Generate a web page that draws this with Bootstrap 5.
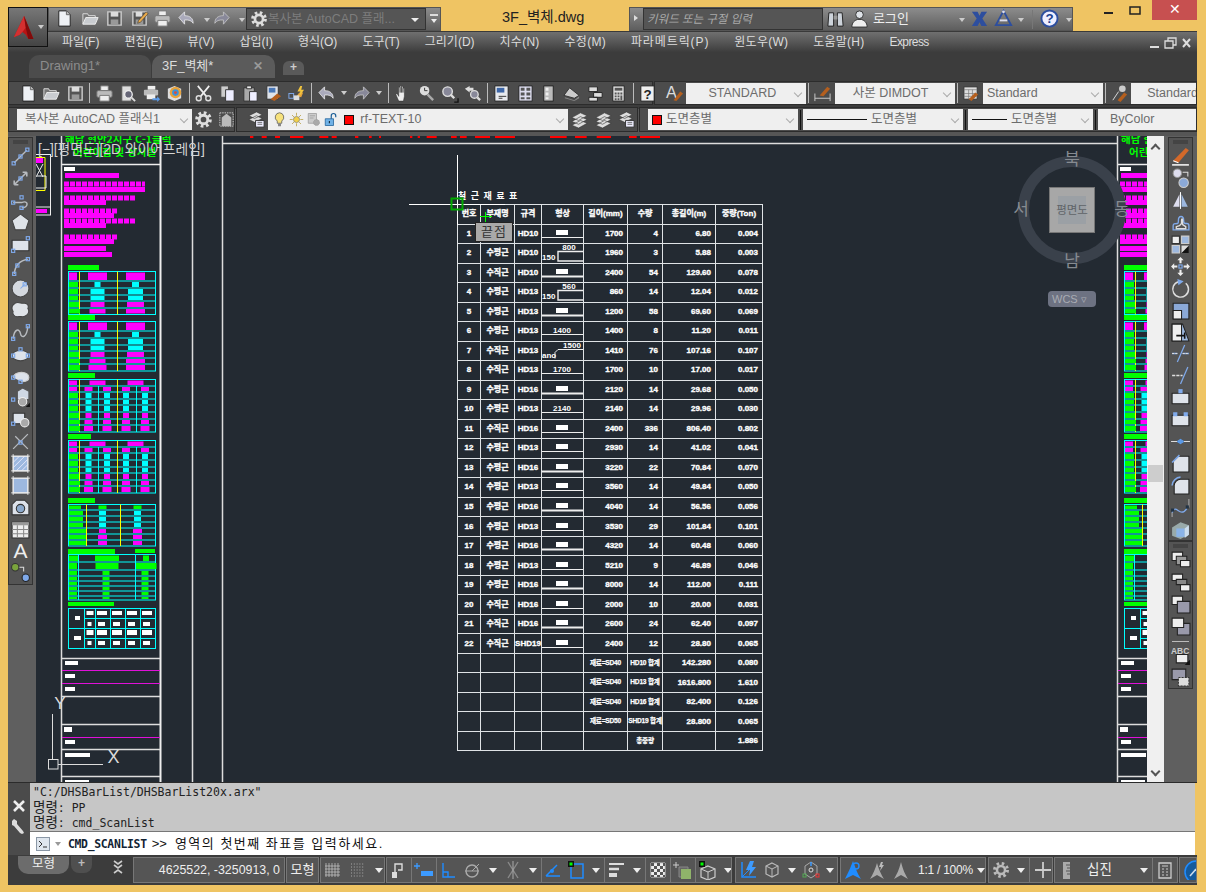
<!DOCTYPE html>
<html lang="ko">
<head>
<meta charset="UTF-8">
<title>3F_벽체.dwg - AutoCAD</title>
<link href="https://cdn.jsdelivr.net/npm/bootstrap@5.3.0/dist/css/bootstrap.min.css" rel="stylesheet">
<style>
    :root { --kr: "Liberation Sans", "Noto Sans CJK KR", sans-serif; }
    html, body { height: 892px; overflow: hidden; }
    body { background: #efc463; font-family: var(--kr); width: 1206px; padding: 0 9px 0 8px; position: relative; }
    svg { display: block; }

    /* title row */
    .title-row { height: 31px; padding-top: 7px; }
    .logo-btn { position: absolute; left: 8px; top: 7px; width: 40px; height: 40px; background: linear-gradient(#777, #444); border: 1px solid #111; z-index: 3; }
    .qat { margin-left: 40px; width: 393px; height: 24px; background: linear-gradient(#8c8c8c, #5e5e5e); border: 1px solid #555; }
    .qat-combo { position: absolute; left: 197px; top: 0; width: 180px; height: 22px; background: #555; border: 1px solid #333; color: #7d7d7d; font-size: 12.5px; line-height: 20px; white-space: nowrap; }
    .doc-title { margin-left: 61px; width: 82px; font-size: 14.5px; color: #222; line-height: 18px; padding-top: 1px; white-space: nowrap; }
    .info-center { margin-left: 45px; width: 444px; height: 24px; background: linear-gradient(#8c8c8c, #5e5e5e); border: 1px solid #555; }
    .search-box { position: absolute; left: 13px; top: 0; width: 180px; height: 22px; background: #555; border: 1px solid #333; color: #aaa; font-style: italic; font-size: 11.5px; line-height: 20px; padding-left: 3px; }
    .win-btns { margin-left: auto; margin-top: -7px; height: 20px; }
    .win-close { width: 45px; height: 20px; background: #c75050; color: #fff; font-size: 14px; line-height: 19px; text-align: center; }
    .at { position: absolute; }

    /* menu + tabs */
    .menu-row { height: 21px; background: linear-gradient(#707070, #3d3d3d); padding-left: 54px; color: #ddd; font-size: 12px; line-height: 21px; gap: 25px; white-space: nowrap; border-top: 1px solid #3a3a3a; }
    .menu-row span:nth-child(n+8) { letter-spacing: .25px; }
    .menu-row span:nth-child(10) { letter-spacing: .9px; }
    .menu-row span:nth-child(13) { letter-spacing: -.6px; }
    .tab-row { height: 26px; background: #3c3c3c; padding: 3px 0 0 21px; }
    .doc-tab { height: 23px; font-size: 13px; line-height: 22px; border-radius: 10px 10px 0 0; position: relative; }
    .doc-tab.off { width: 122px; background: #4c4c4c; color: #8c8c8c; padding-left: 11px; }
    .doc-tab.on { width: 123px; margin-left: 1px; background: #5b5b5b; color: #ddd; padding-left: 10px; }
    .doc-tab.plus { width: 21px; height: 14px; margin: 6px 0 0 8px; background: #5a5a5a; color: #ccc; border-radius: 6px 6px 0 0; font-size: 12px; line-height: 13px; text-align: center; font-weight: bold; }

    /* toolbars */
    .tb-row { height: 27px; background: #3c3c3c; padding-top: 3px; gap: 1px; overflow: hidden; }
    .tb-row2 { height: 31px; background: #565656; box-shadow: inset 0 4px 0 #3c3c3c; padding-top: 2px; gap: 1px; overflow: hidden; }
    .tb-panel { height: 24px; background: #4c4c4c; border: 1px solid #2c2c2c; align-items: center; flex: none; }
    .tb-panel.fill { flex: 1; min-width: 0; overflow: hidden; }
    .tb-row2 .tb-panel { height: 25px; }
    .grip { width: 5px; height: 14px; margin: 0 1px 0 2px; flex: none; background-image: radial-gradient(#a0a0a0 40%, transparent 45%); background-size: 2px 2px; }
    .ti { flex: none; width: 23.3px; display: flex; justify-content: center; }
    .ti svg { width: 19px; height: 19px; }
    .tsep { flex: none; width: 1px; height: 20px; background: #bbb; margin: 0 2.5px; }
    .caret-d { flex: none; width: 0; height: 0; border-left: 3px solid transparent; border-right: 3px solid transparent; border-top: 4px solid #ccc; margin: 0 3px; }
    .cad-combo { flex: none; height: 21px; background: #efefef; color: #6c6c6c; font-size: 12.5px; position: relative; display: flex; align-items: center; white-space: nowrap; overflow: hidden; }
    .cad-combo::after { content: ""; position: absolute; right: 5px; top: 7px; width: 6px; height: 6px; border-right: 1.5px solid #aaa; border-bottom: 1.5px solid #aaa; transform: rotate(45deg); background: #efefef; }
    .lt-line { flex: none; height: 1px; background: #111; }
    .sw-red { flex: none; width: 10px; height: 10px; background: #f00; border: 1px solid #111; }

    /* middle */
    .mid-row { height: 646px; background: #5f5f5f; }
    .side-left { width: 28px; padding-top: 1px; }
    .side-right { width: 33px; padding: 1px 0 0 4px; }
    .vbar { width: 25px; background: #545454; border: 1px solid #333; }
    .vbar .grip-h { height: 8px; margin: 0 -0px; background: #444 radial-gradient(#999 40%, transparent 45%) center / 2px 2px; background-clip: content-box; padding: 2px 4px; }
    .vi { height: 21.9px; display: flex; justify-content: center; align-items: center; }
    .vi svg { width: 21px; height: 21px; }
    .canvas-area { width: 1111px; background: #232a32; position: relative; overflow: hidden; }
    .canvas-area > svg { position: absolute; left: 0; top: 0; }
    .view-label { position: absolute; left: 2px; top: 5px; color: #d4d4d4; font-size: 13.8px; line-height: 18px; white-space: nowrap; }
    .rebar-wrap { position: absolute; left: 421px; top: 68px; }
    .rebar-table { --bs-table-bg: transparent; --bs-table-color: #fff; --bs-border-color: #dfe3e6; width: 305px; table-layout: fixed; margin: 0; color: #fff; font-size: 8px; font-weight: bold; line-height: 1; -webkit-text-stroke: .35px #fff; border-color: #dfe3e6; }
    .rebar-table > * > tr > * { padding: 0 4px 0 0; height: 19.53px; vertical-align: middle; text-align: right; white-space: nowrap; background: transparent; color: #fff; }
    .rebar-table > * > tr > .c { text-align: center; padding: 0; }
    .rebar-table > * > tr > .s { padding: 0; overflow: hidden; }
    .rebar-table > * > tr > .sum-cell { font-size: 6.6px; letter-spacing: -.2px; -webkit-text-stroke: .25px #fff; }
    .rebar-table svg { -webkit-text-stroke: 0; }
    .snap-tip { position: absolute; left: 439px; top: 86px; width: 38px; height: 20px; background: #a9a9a9; border: 1px solid #222; color: #333; font-size: 13px; line-height: 18px; text-align: center; letter-spacing: 1px; }
    .view-cube { position: absolute; left: 977px; top: 14px; width: 120px; height: 180px; }
    .cube-face { position: absolute; left: 36px; top: 37px; width: 46px; height: 46px; background: #a7a7a7; border: 1px solid #777; }
    .cube-inner { position: absolute; left: 8px; top: 8px; width: 28px; height: 28px; background: #9ba0a5; color: #606468; font-size: 11.5px; line-height: 28px; text-align: center; white-space: nowrap; display: flex; justify-content: center; }
    .cube-dir { position: absolute; color: #868b91; font-size: 17px; line-height: 20px; width: 20px; text-align: center; }
    .wcs-pill { position: absolute; left: 35px; top: 141px; width: 48px; height: 16px; background: #6d7282; border-radius: 4px; color: #a9acb3; font-size: 11px; line-height: 16px; padding-left: 4px; }
    .v-scroll { width: 17px; background: #f0f0f0; position: relative; }
    .v-thumb { position: absolute; left: 1px; right: 1px; top: 329px; height: 17px; background: #cdcdcd; }
    .chev { position: absolute; left: 5px; width: 7px; height: 7px; border-left: 2px solid #555; border-top: 2px solid #555; }

    /* command line */
    .cmd-row { height: 73px; border-top: 1px solid #2b2b2b; }
    .cmd-handle { width: 22px; background: #4b4b4b; }
    .cmd-body { width: 1165px; }
    .cmd-hist { height: 49px; background: #c6c6c6; border-bottom: 1px solid #777; font: 11.5px/15.5px "DejaVu Sans Mono", "Noto Sans CJK KR", monospace; color: #222; padding: 2px 0 0 3px; white-space: pre; }
    .cmd-hist b { font-weight: normal; font-size: 13.5px; line-height: 1; }
    .cmd-input { height: 23px; background: #fff; color: #111; padding-left: 6px; gap: 5px; font-size: 13px; white-space: nowrap; }
    .cmd-input code { font: bold 11.4px "DejaVu Sans Mono", monospace; color: #123; letter-spacing: -.3px; }
    .cmd-prompt { letter-spacing: 1.500px; margin-left: 3px; }

    /* status */
    .status-row { height: 30px; background: #3c3c3c; }
    .model-tabs { width: 125px; position: relative; flex: none; }
    .model-tab { position: absolute; left: 10px; top: 1px; width: 51px; height: 18px; background: #6c6c6c; color: #eee; font-size: 12.5px; line-height: 16px; text-align: center; border-radius: 0 0 10px 10px; }
    .plus-tab { position: absolute; left: 63px; top: 1px; width: 21px; height: 17px; background: #4f4f4f; color: #bbb; border-radius: 0 0 8px 8px; font-size: 12px; line-height: 14px; text-align: center; font-weight: bold; }
    .st-panel { height: 26px; margin-top: 2px; background: #555; border: 1px solid #777; color: #eee; font-size: 13px; align-items: center; white-space: nowrap; flex: none; overflow: hidden; }
    .st-i { flex: none; display: flex; justify-content: center; }
    .st-i svg { width: 20px; height: 20px; }
    .st-sep { flex: none; width: 1px; height: 26px; background: #777; }
    .st-panel .caret-d { border-top-color: #eee; border-left-width: 4px; border-right-width: 4px; border-top-width: 5px; margin: 0 4px; }
    .coord-text { font-size: 12.4px; }
    .scale-text { font-size: 12px; letter-spacing: -.25px; width: 58px; margin-left: 5px; }
</style>
</head>
<body>

<div class="logo-btn d-flex align-items-center ps-1">
    <svg width="27" height="30" viewBox="0 0 27 30"><path d="M13 2L1 27l7-3 3-3 4 3 3 5h6z" fill="#b81414"/><path d="M13 2l2 14-4 5-3 3-7 3z" fill="#d43030"/><path d="M15 16l3 13h6L13 2z" fill="#7f0b0b"/></svg>
    <span class="caret-d" style="margin-left:2px"></span>
</div>

<div class="title-row d-flex">
    <div class="qat position-relative flex-none" id="qat"></div>
    <div class="doc-title">3F_벽체.dwg</div>
    <div class="info-center position-relative" id="infoCenter">
        <div class="search-box">키워드 또는 구절 입력</div>
    </div>
    <div class="win-btns d-flex align-items-start">
        <svg width="40" height="20" viewBox="0 0 40 20"><path d="M0 12h9v2H0z" fill="#222"/><path d="M26 7h10v7H26z" fill="none" stroke="#222" stroke-width="1.5"/></svg>
        <div class="win-close ms-2">✕</div>
    </div>
</div>

<div class="menu-row d-flex">
    <span>파일(F)</span><span>편집(E)</span><span>뷰(V)</span><span>삽입(I)</span><span>형식(O)</span><span>도구(T)</span><span>그리기(D)</span><span>치수(N)</span><span>수정(M)</span><span>파라메트릭(P)</span><span>윈도우(W)</span><span>도움말(H)</span><span>Express</span>
    <svg class="ms-auto me-1 mt-1" width="44" height="14" viewBox="0 0 44 14"><path d="M1 10h9v2H1z" fill="#ddd"/><path d="M16 5h8v7h-8zM19 5V2h8v7h-3" fill="none" stroke="#ddd" stroke-width="1.3"/><path d="M34 3l7 8M41 3l-7 8" stroke="#ddd" stroke-width="2"/></svg>
</div>

<div class="tab-row d-flex">
    <div class="doc-tab off">Drawing1*</div>
    <div class="doc-tab on">3F_벽체*<span class="at" style="right:12px;top:0;color:#999;font-size:12px;font-weight:bold">✕</span></div>
    <div class="doc-tab plus">+</div>
</div>

<div class="tb-row d-flex" id="tbRow1"></div>
<div class="tb-row2 d-flex" id="tbRow2"></div>

<div class="mid-row d-flex">
    <div class="side-left"><div class="vbar" id="leftBar"></div></div>
    <div class="canvas-area">
        <svg id="cadSvg" width="1111" height="646" viewBox="36 136 1111 646" xmlns="http://www.w3.org/2000/svg"></svg>
        <div class="view-label">[−][평면도][2D 와이어프레임]</div>
        <div class="rebar-wrap">
            <table class="table table-bordered rebar-table" id="rebarTable"></table>
        </div>
        <div class="snap-tip">끝점</div>
        <div class="view-cube">
            <svg class="at" style="left:0;top:1px" width="118" height="118" viewBox="0 0 118 118"><circle cx="59" cy="59" r="48.5" fill="none" stroke="#3a414b" stroke-width="11"/></svg>
            <div class="cube-face"><div class="cube-inner">평면도</div></div>
            <div class="cube-dir" style="left:49px;top:0">북</div>
            <div class="cube-dir" style="left:-2px;top:50px">서</div>
            <div class="cube-dir" style="left:99px;top:50px">동</div>
            <div class="cube-dir" style="left:49px;top:102px">남</div>
            <div class="wcs-pill">WCS ▿</div>
        </div>
    </div>
    <div class="v-scroll">
        <div class="chev" style="top:9px;transform:rotate(45deg)"></div>
        <div class="v-thumb"></div>
        <div class="chev" style="bottom:7px;transform:rotate(225deg)"></div>
    </div>
    <div class="side-right">
        <div class="vbar" id="rightBar1"></div>
        <div class="vbar mt-0" id="rightBar2"></div>
    </div>
</div>

<div class="cmd-row d-flex">
    <div class="cmd-handle d-flex flex-column align-items-center">
        <div class="grip" style="width:18px;height:6px;margin:4px 0 6px"></div>
        <svg width="14" height="14" viewBox="0 0 14 14"><path d="M2 2l10 10M12 2L2 12" stroke="#eee" stroke-width="2.6"/></svg>
        <svg class="mt-1" width="16" height="18" viewBox="0 0 16 18"><path d="M3 2l3 2v3l6 7 1 2-2 1-2-1-6-7-2-1V4z" fill="#ddd"/></svg>
    </div>
    <div class="cmd-body">
        <div class="cmd-hist">"C:/DHSBarList/DHSBarList20x.arx"
<b>명령</b>: PP
<b>명령</b>: cmd_ScanList</div>
        <div class="cmd-input d-flex align-items-center">
            <svg width="14" height="14" viewBox="0 0 14 14"><rect x=".5" y=".5" width="13" height="13" fill="#dfe6ee" stroke="#8a97a6"/><path d="M3 4l3 3-3 3M7 10h4" fill="none" stroke="#333"/></svg>
            <span class="caret-d" style="border-top-color:#999;margin:0 2px 0 0"></span>
            <code>CMD_SCANLIST</code><span>&gt;&gt;</span><span class="cmd-prompt">영역의 첫번째 좌표를 입력하세요.</span>
        </div>
    </div>
</div>

<div class="status-row d-flex" id="statusRow">
    <div class="model-tabs">
        <div class="model-tab">모형</div>
        <div class="plus-tab">+</div>
        <svg class="at" style="left:105px;top:5px" width="10" height="14" viewBox="0 0 10 14"><path d="M1 1l4 3 4-3M1 5l4 3 4-3M1 13l4-3 4 3" fill="none" stroke="#ccc" stroke-width="1.6"/></svg>
    </div>
</div>

<script src="https://cdn.jsdelivr.net/npm/bootstrap@5.3.0/dist/js/bootstrap.bundle.min.js"></script>
<script>
    // icon strokes, 20x20 box
    const B = '#7fa9ea', W = '#e6e9ee', G = '#b9bcc0';
    const h = (x, y) => `<rect x="${x-1.5}" y="${y-1.5}" width="3" height="3" fill="none" stroke="${B}" stroke-width="1.1"/>`;
    const ICONS = {
        new: `<path d="M4 2h8l4 4v12H4z" fill="#eef1f5" stroke="#222"/><path d="M12 2v4h4" fill="#bbb" stroke="#666"/>`,
        open: `<path d="M2 16V5h5l1 2h7v2" fill="#777" stroke="#ddd"/><path d="M2 16l3-7h13l-3 7z" fill="#c9ccd0" stroke="#eee"/>`,
        save: `<path d="M3 3h14v14H3z" fill="#555" stroke="#ccc" stroke-width="1.5"/><path d="M6 3h8v5H6z" fill="#ddd"/><path d="M6 11h8v6H6z" fill="#999"/>`,
        saveas: `<path d="M3 3h14v14H3z" fill="#555" stroke="#ccc" stroke-width="1.5"/><path d="M6 3h7v5H6z" fill="#ddd"/><path d="M6 11h8v6H6z" fill="#999"/><path d="M9 12l8-9 2 2-8 9-3 1z" fill="#e8a94a" stroke="#333" stroke-width=".6"/>`,
        plot: `<path d="M6 2h8v5H6z" fill="#eee" stroke="#777"/><rect x="2" y="7" width="16" height="7" rx="1.5" fill="#bbb" stroke="#777"/><path d="M5 12h10v6H5z" fill="#eee" stroke="#777"/>`,
        prev: `<path d="M4 2h10v16H4z" fill="#ddd" stroke="#555"/><circle cx="11" cy="11" r="4" fill="#667" stroke="#eee" stroke-width="1.4"/><path d="M14 14l4 4" stroke="#ddd" stroke-width="2"/>`,
        publ: `<path d="M6 2h8v4H6z" fill="#eee"/><rect x="2" y="6" width="15" height="6" rx="1" fill="#bbb"/><path d="M5 11h9v5H5z" fill="#eee"/><path d="M11 15h5v-2l3 3-3 3v-2h-5z" fill="#5b9ae8"/>`,
        d3: `<path d="M10 2l7 3v10l-7 3-7-3V5z" fill="#ddd"/><circle cx="11" cy="9" r="6" fill="#e8a33c"/><circle cx="11" cy="9" r="3.5" fill="#3c93d8"/><circle cx="11" cy="9" r="1.5" fill="#e04b3a"/>`,
        cut: `<path d="M4 2l9 11M16 2L7 13" stroke="#eee" stroke-width="1.8"/><circle cx="5" cy="15" r="2.6" fill="none" stroke="#ddd" stroke-width="1.5"/><circle cx="15" cy="15" r="2.6" fill="none" stroke="#ddd" stroke-width="1.5"/>`,
        copy: `<path d="M3 2h8v12H3z" fill="#ccc" stroke="#444"/><path d="M8 6h9v12H8z" fill="#eef" stroke="#333"/>`,
        paste: `<path d="M3 4h11v14H3z" fill="#aaa" stroke="#333"/><path d="M6 2h5v3H6z" fill="#eee" stroke="#333"/><path d="M9 8h8v10H9z" fill="#eef" stroke="#333"/>`,
        match: `<path d="M3 2h12v14H3z" fill="#dfe3ea" stroke="#333"/><path d="M5 4h7v5H5z" fill="#4a78b8"/><path d="M7 16l7-6 4 3-7 5z" fill="#b55f1e"/>`,
        block: `<path d="M10 13l3-4h4l-2 5z" fill="#e7a43a"/><path d="M14 2l-3 6h3l-1 5 5-7h-3l1-4z" fill="#f2c53d"/><rect x="2" y="10" width="5" height="5" fill="none" stroke="${B}"/><path d="M7 12h6v5H7z" fill="#ddd"/>`,
        undo: `<path d="M2 9l6-6v4c6 0 9 3 9 8-2-3-4-3.500-9-3.500V16z" fill="#aab" stroke="#eee" stroke-width=".8"/>`,
        redo: `<path d="M18 9l-6-6v4C6 7 3 10 3 15c2-3 4-3.500 9-3.500V16z" fill="#889" stroke="#ccc" stroke-width=".8"/>`,
        pan: `<path d="M6 18l-3-7c0-1 1-1 2 0l1 2V4c0-1 1.500-1 1.500 0v5V2.500c0-1 1.500-1 1.500 0V9V3c0-1 1.500-1 1.500 0v6V5c0-1 1.500-1 1.500 0v8l-1 5z" fill="#eee" stroke="#333" stroke-width=".6"/>`,
        zrt: `<circle cx="8" cy="7" r="5" fill="#ddd"/><path d="M8 4v3h3" fill="none" stroke="#333"/><path d="M11 11l6 6" stroke="#aaa" stroke-width="2.500"/>`,
        zwin: `<circle cx="8" cy="8" r="5" fill="#889" stroke="#ddd" stroke-width="1.500"/><path d="M11 11l4 4" stroke="#ddd" stroke-width="2.500"/><path d="M15 19h4v-4" fill="none" stroke="#111" stroke-width="1.400"/>`,
        zprev: `<path d="M2 5l5-3v2h4v3H7v2z" fill="#ddd"/><circle cx="12" cy="11" r="4" fill="#889" stroke="#ddd" stroke-width="1.400"/><path d="M15 14l3 3" stroke="#ddd" stroke-width="2.500"/>`,
        props: `<path d="M3 2h14v16H3z" fill="#e8eaee" stroke="#222"/><path d="M5 4h8v5H5z" fill="#3e67a8"/><path d="M7 13h8M7 15h4" stroke="#333"/>`,
        dc: `<path d="M3 2h14v16H3z" fill="#dde" stroke="#222"/><path d="M5 4h4v3H5zM11 4h4v3h-4zM5 9h4v3H5zM11 9h4v3h-4zM5 14h4v2H5zM11 14h4v2h-4z" fill="#555"/>`,
        tool: `<path d="M5 2h10v16H5z" fill="#bbb" stroke="#222"/><path d="M7 4h3v3H7zM7 9h3v3H7zM7 14h3v2H7z" fill="#eee"/>`,
        sheet: `<path d="M2 12l6-8 10 8-5 3z" fill="#ccc" stroke="#333"/><path d="M3 14l10 3 5-4v2l-5 3-10-3z" fill="#888"/>`,
        markup: `<path d="M3 3h9v5H3zM8 9h9v5H8zM3 14h9v4H3z" fill="#ddd" stroke="#222"/>`,
        calc: `<path d="M4 2h12v16H4z" fill="#ddd" stroke="#222"/><path d="M6 4h8v3H6z" fill="#555"/><path d="M6 9h2v2H6zM9 9h2v2H9zM12 9h2v2h-2zM6 12h2v2H6zM9 12h2v2H9zM12 12h2v5h-2zM6 15h2v2H6zM9 15h2v2H9z" fill="#555"/>`,
        help: `<path d="M3 2h14v16H3z" fill="#eee" stroke="#222"/><text x="10" y="15.500" text-anchor="middle" font-family="Liberation Sans" font-weight="bold" font-size="14" fill="#222">?</text>`,
        gear: `<circle cx="10" cy="10" r="7" fill="none" stroke="#ddd" stroke-width="3.500" stroke-dasharray="2.800 2.700"/><circle cx="10" cy="10" r="4.500" fill="none" stroke="#ddd" stroke-width="3"/>`,
        wslock: `<path d="M3 3h14v14H3z" fill="none" stroke="#ccc" stroke-dasharray="1.500 1"/><path d="M5 17V8l5-4 5 4v9z" fill="#bbb"/>`,
        style: `<text x="1" y="15" font-family="Liberation Sans" font-size="17" fill="#ddd">A</text><path d="M9 17l7-9 3 2-7 8z" fill="#b55f1e"/>`,
        dim: `<path d="M2 10v8M18 10v8M2 15h16" stroke="#ccc"/><path d="M7 12l8-9 3 2-7 8z" fill="#b55f1e"/>`,
        tbl: `<path d="M2 3h14v13H2z" fill="#ddd" stroke="#333"/><path d="M2 6h14M2 10h14M2 13h14M7 6v10M11 6v10" stroke="#777" stroke-width=".7"/><path d="M7 16l7-7 3 2-7 7z" fill="#b55f1e"/>`,
        mlead: `<circle cx="13" cy="5" r="3.500" fill="#ccc"/><path d="M3 17l6-9" stroke="#ddd"/><path d="M8 17l7-8 3 2-7 8z" fill="#b55f1e"/>`,
        layers: `<path d="M2 6l8-4 6 3-8 4zM2 10l8-4 6 3-8 4z" fill="#ddd" stroke="#333" stroke-width=".6"/><path d="M9 11h9v7H9z" fill="#eef" stroke="#333"/><path d="M11 13h5M11 15h5" stroke="#666"/>`,
        lstack: `<path d="M2 8l9-5 7 3-9 5zM2 12l9-5 7 3-9 5zM2 16l9-5 7 3-9 5z" fill="#ddd" stroke="#333" stroke-width=".6"/>`,
        bulb: `<path d="M10 1a6 6 0 0 0-3 11v3h6v-3a6 6 0 0 0-3-11z" fill="#f7e27c" stroke="#555"/><path d="M8 15h4v4H8z" fill="#888"/>`,
        sun: `<circle cx="10" cy="10" r="4" fill="#f2d04a" stroke="#887"/><path d="M10 1v4M10 15v4M1 10h4M15 10h4M4 4l3 3M13 13l3 3M16 4l-3 3M7 13l-3 3" stroke="#b59b3a"/>`,
        frz: `<path d="M3 2h11v13H3z" fill="#ccc" stroke="#999"/><path d="M5 5h7M5 8h5" stroke="#999"/><circle cx="14" cy="14" r="4" fill="#aaa" stroke="#999" stroke-dasharray="2 1"/>`,
        lock: `<path d="M3 9h11v9H3z" fill="#6fb1e6" stroke="#1b5e96"/><path d="M11 9V5c0-4 6-4 6 0v2" fill="none" stroke="#1b5e96" stroke-width="1.600"/><path d="M8.500 12v3" stroke="#123" stroke-width="1.400"/>`,
        line: `<path d="M4 16L16 4" stroke="${G}" stroke-width="1.300"/>${h(3.5,16.5)}${h(10,10)}${h(16.5,3.5)}`,
        xline: `<path d="M4 16L16 4M4 16l0-4M4 16h4M16 4l-4 0M16 4v4" stroke="${G}" stroke-width="1.500" fill="none"/>${h(10,10)}`,
        pline: `<path d="M3 12h8c7-3 7 5 0 5" fill="none" stroke="${G}" stroke-width="1.400"/>${h(3,12)}${h(11,17)}${h(11,7)}`,
        polygon: `<path d="M10 2l8 6-3 9H5L2 8z" fill="#dfe3e8" stroke="#444"/>`,
        rect: `<path d="M2 6h16v10H2z" fill="#dde2ea" stroke="#333"/>${h(17,4)}${h(3,16)}`,
        arc: `<path d="M4 17C5 8 10 4 17 3" fill="none" stroke="${G}" stroke-width="1.400"/>${h(4,17)}${h(7,9)}${h(17,3)}`,
        circle: `<circle cx="10" cy="10" r="8" fill="#d4d8de" stroke="#444"/><path d="M10 10l4-4" stroke="${B}"/>${h(14,6)}`,
        cloud: `<path d="M5 3c3-2 6 1 9 0 3 0 4 3 3 5 2 3 0 6-2 7-3 2-5 0-8 1-3 0-5-3-4-5-2-3-1-6 2-8z" fill="#dfe3e8" stroke="#444"/>`,
        spline: `<path d="M3 16C4 6 9 6 10 11s6 4 7-7" fill="none" stroke="${G}" stroke-width="1.400"/>${h(3,16)}${h(17,4)}`,
        ellipse: `<ellipse cx="10" cy="12" rx="8" ry="5" fill="#dde2ea" stroke="#444"/>${h(10,6)}${h(3,12)}${h(17,12)}`,
        earc: `<path d="M3 12c0-3 4-5 8-5s7 2 7 5-3 4-7 4" fill="#dde2ea" stroke="#ccc"/>${h(3,12)}${h(10,16)}`,
        insert: `<path d="M7 4l5-3 6 3v8h-11z" fill="#cfd8e4" stroke="#555"/><circle cx="12" cy="14" r="4" fill="#aaa" stroke="#eee"/>${h(3,12)}<path d="M15 19l4-4v4z" fill="#111"/>`,
        mkblock: `<path d="M3 4h11v10H3z" fill="#dde2ea" stroke="#333"/><circle cx="14" cy="13" r="4" fill="#aaa" stroke="#eee"/>${h(3,14)}`,
        point: `<path d="M3 17L17 3M5 5l12 12" stroke="${G}" stroke-width="1.200"/>${h(10,11)}`,
        hatch: `<path d="M3 3h14v14H3z" fill="#9db8df" stroke="#eee"/><path d="M3 9l6-6M3 14L14 3M6 17L17 6M11 17l6-6" stroke="#eef" stroke-width=".8"/><path d="M1 3h18M3 1v18M1 17h18M17 1v18" stroke="#eee" stroke-width=".8"/>`,
        grad: `<path d="M3 3h14v14H3z" fill="#9db8df" stroke="#eee"/><path d="M1 3h18M3 1v18M1 17h18M17 1v18" stroke="#eee" stroke-width=".8"/>`,
        region: `<path d="M6 3h8l4 4v10H2V7z" fill="#dde2ea" stroke="#333"/><circle cx="10" cy="11" r="4" fill="#8ba9cc" stroke="#333"/>`,
        table: `<path d="M2 3h16v15H2z" fill="#eee" stroke="#333"/><path d="M2 3h16v3H2z" fill="#999"/><path d="M2 10h16M2 14h16M7 6v12M13 6v12" stroke="#888"/>`,
        bigA: `<text x="10" y="17" text-anchor="middle" font-family="Liberation Sans" font-size="20" fill="#eee">A</text>`,
        addsel: `<circle cx="5" cy="5" r="3.500" fill="#7aa33c" stroke="#333"/><circle cx="15" cy="15" r="3.500" fill="#7fa9ea" stroke="#222"/><path d="M9 5h4v4" fill="none" stroke="#ddd"/>`,
        erase: `<path d="M3 14L15 2l3 2-10 12z" fill="#d4692a"/><path d="M3 14l5 2" stroke="#fff"/><path d="M2 18h16" stroke="#fff" stroke-width="1.400"/>`,
        copyo: `<circle cx="7" cy="5" r="4" fill="#dde" stroke="#999"/><circle cx="13" cy="14" r="4.500" fill="#8ba9d8" stroke="#ccc"/><path d="M12 4h5v4" fill="none" stroke="#ddd"/>`,
        mirror: `<path d="M10 2v16" stroke="#fff"/><path d="M9 4v12H3z" fill="#dde"/><path d="M11 4v12h6z" fill="#9db8df"/>`,
        offset: `<path d="M3 17v-4c0-2 1-2 4-2 1 0 1-1 1-3 0-5 5-5 5 0 0 3 1 3 3 3 2 0 2 1 2 2v4z" fill="none" stroke="${B}" stroke-width="1.300"/><path d="M6 16v-2l3-1 2-2v-3c0-2 1-2 1 0v4l3 2v2z" fill="none" stroke="#ddd" stroke-width="1.300"/>`,
        array: `<path d="M2 2h7v7H2z" fill="#eee" stroke="#333"/><path d="M11 2h7v7h-7zM2 11h7v7H2z" fill="#9db8df" stroke="#ccc"/><path d="M11 11h7v7h-7z" fill="#ddd"/><path d="M18 11v7h-7z" fill="#111"/>`,
        move: `<path d="M10 1l3 3h-2v3H9V4H7zM10 19l-3-3h2v-3h2v3h2zM1 10l3-3v2h3v2H4v2zM19 10l-3 3v-2h-3V9h3V7z" fill="#eee"/>${h(10,10)}`,
        rotate: `<path d="M15 5a7.500 7.500 0 1 1-7-1.500" fill="none" stroke="#ddd" stroke-width="1.400"/><path d="M7 1l6 2-5 4z" fill="#7fa9ea"/>`,
        scale: `<path d="M3 3h15v15H3z" fill="#8ba9d8" stroke="#222"/><path d="M3 10h8v8H3z" fill="#eee" stroke="#222"/>`,
        stretch: `<path d="M2 2h10l6 16H2z" fill="#9db8df" stroke="#222"/><path d="M2 2h9v16H2z" fill="#eee" stroke="#222"/><path d="M6 13h8M14 10v6" stroke="#111" stroke-width="1.500"/>`,
        trim: `<path d="M2 10h5M12 10h6M14 2L7 18" stroke="${B}" stroke-width="1.200"/><path d="M2 10h6" stroke="#ddd" stroke-dasharray="2 1"/><path d="M12 10h6" stroke="#ddd" stroke-dasharray="2 1"/>`,
        extend: `<path d="M2 10h10" stroke="#ddd" stroke-dasharray="3 1" stroke-width="1.200"/><path d="M17 2l-7 16" stroke="${B}" stroke-width="1.200"/>`,
        brkp: `<path d="M2 6h16v10H2z" fill="#dfe3ea" stroke="#222"/><path d="M8 2h4v4H8z" fill="#7fa9ea"/>`,
        brk: `<path d="M2 6h16v10H2z" fill="#dfe3ea" stroke="#222"/><path d="M3 3h4v4H3zM13 3h4v4h-4z" fill="#7fa9ea"/>`,
        join: `<path d="M1 10h6M13 10h6" stroke="#ddd"/><path d="M7 10l3 2 3-2M7 10l3-2 3 2" fill="#5b9ae8" stroke="#5b9ae8"/>`,
        chamf: `<path d="M8 3h10v15H3V8z" fill="#dfe3ea" stroke="#222"/><path d="M2 9L9 2" stroke="#7fa9ea" stroke-width="1.500"/>`,
        fillet: `<path d="M10 4h8v14H4v-8c0-3 3-6 6-6z" fill="#dfe3ea" stroke="#222"/><path d="M2 10c0-4 4-8 8-8" fill="none" stroke="#7fa9ea" stroke-width="1.500"/>`,
        blend: `<path d="M2 15c4-10 7 6 14-4" fill="none" stroke="#7fa9ea" stroke-width="1.300"/><path d="M2 15v4M18 2v8" stroke="#aaa"/><rect x="1" y="11" width="3" height="3" fill="#234"/><rect x="15" y="8" width="3" height="3" fill="#234"/>`,
        expl: `<path d="M2 8l8-5 8 3v9l-8 4-8-3z" fill="#9aa"/><path d="M6 9h8v8H6z" fill="#8ab3e8"/><path d="M14 9l4-3v9l-4 3z" fill="#cde"/>`,
        dofront: `<path d="M2 2h10v8H2z" fill="#eee" stroke="#222"/><path d="M6 6h10v8H6z" fill="#999" stroke="#222"/><path d="M10 10h9v6h-9z" fill="#eee" stroke="#222"/>`,
        doback: `<path d="M2 2h10v6H2z" fill="#eee" stroke="#222"/><path d="M6 7h10v5H6z" fill="#888" stroke="#222"/><path d="M10 12h9v6h-9z" fill="#eee" stroke="#222"/>`,
        doabove: `<path d="M2 2h10v8H2z" fill="#eee" stroke="#222"/><path d="M7 7h12v11H7z" fill="#99a" stroke="#222"/>`,
        dobelow: `<path d="M7 7h12v11H7z" fill="#99a" stroke="#222"/><path d="M2 2h11v9H2z" fill="#eee" stroke="#222"/>`,
        textfront: `<text x="1" y="9" font-family="Liberation Sans" font-size="8" font-weight="bold" fill="#ccc">ABC</text><path d="M6 9h11v8H6z" fill="#eee" stroke="#222"/><path d="M14 19l5-5v5z" fill="#111"/>`,
        hatchback: `<path d="M2 2h13v10H2z" fill="#99a" stroke="#222"/><path d="M8 10h10v8H8z" fill="#ddd" stroke="#333" stroke-dasharray="2 1"/>`,
        // status bar
        grid: `<path d="M3 3v14M6 3v14M9 3v14M12 3v14M15 3v14M2 6h15M2 9h15M2 12h15M2 15h15" stroke="#ccc" stroke-width=".7"/>`,
        snap: `<path d="M3 4h14M3 7h14M3 10h14M3 13h14M3 16h14" stroke="#aaa" stroke-width="1" stroke-dasharray="1 1.800"/>`,
        infer: `<path d="M6 17V4h7v6H9" fill="none" stroke="#ddd" stroke-width="1.400"/><path d="M3 12h5v6H3z" fill="#ddd"/>`,
        dyn: `<path d="M3 3v6M0 6h6" stroke="#3d9bff" stroke-width="1.300"/><rect x="7" y="11" width="12" height="5" fill="#3d9bff"/>`,
        ortho: `<path d="M4 3v14h12M4 12h5v5" fill="none" stroke="#1f8cff" stroke-width="1.400"/>`,
        polar: `<circle cx="9" cy="11" r="6" fill="none" stroke="#aaa" stroke-width="1.400"/><path d="M9 11l7-7M2 11h14" stroke="#aaa"/>`,
        iso: `<path d="M5 2l10 16M15 2L5 18" stroke="#8a8a8a" stroke-width="1.400"/><path d="M10 1v18" stroke="#aaa"/>`,
        osnap: `<path d="M3 16h14M3 16L14 5" stroke="#1f8cff" stroke-width="1.500"/><circle cx="9" cy="11" r="2" fill="#1f8cff"/>`,
        snap3: `<path d="M5 4h12v14H5z" fill="none" stroke="#1f8cff" stroke-width="1.500"/><rect x="2" y="1" width="6" height="6" fill="#111"/><rect x="3.500" y="2.500" width="3" height="3" fill="#0f0"/>`,
        lw: `<path d="M2 4h15" stroke="#ddd" stroke-width="2"/><path d="M2 9h10" stroke="#ddd" stroke-width="2.500"/><path d="M2 15h8" stroke="#ddd" stroke-width="4"/>`,
        transp: `<path d="M3 3h14v14H3z" fill="#eee" stroke="#ccc"/><path d="M3 3h3v3H3zM9 3h3v3H9zM15 3h2v3h-2zM6 6h3v3H6zM12 6h3v3h-3zM3 9h3v3H3zM9 9h3v3H9zM15 9h2v3h-2zM6 12h3v3H6zM12 12h3v3h-3zM3 15h3v2H3zM9 15h3v2H9zM15 15h2v2h-2z" fill="#555"/>`,
        selcyc: `<path d="M3 2v6M0 5h6" stroke="#ccc"/><path d="M6 7h9v10H6z" fill="#666" stroke="#888"/><path d="M8 9h10v10H8z" fill="#8fb36a"/>`,
        gizmo: `<path d="M10 6l7 3v8l-7 3-7-3V9z" fill="none" stroke="#ccc" stroke-width="1.200"/><path d="M3 9l7 3 7-3M10 12v8" fill="none" stroke="#ccc"/><rect x="1" y="1" width="6" height="6" fill="#111"/><rect x="2.500" y="2.500" width="3" height="3" fill="#0f0"/>`,
        ducs: `<path d="M4 2v15h14" fill="none" stroke="#1f8cff" stroke-width="1.500"/><path d="M4 17L13 8" stroke="#1f8cff"/><path d="M12 1L8 10h4l-1 6 7-9h-4l2-6z" fill="#3d9bff"/>`,
        dyncube: `<path d="M10 3l6 3v8l-6 3-6-3V6z" fill="none" stroke="#bbb" stroke-width="1.200"/><path d="M4 6l6 3 6-3M10 9v8" fill="none" stroke="#bbb"/>`,
        gizmo2: `<path d="M10 2l6 4v8l-6 4-6-4V6z" fill="none" stroke="#aaa"/><circle cx="10" cy="10" r="2" fill="none" stroke="#ddd"/><path d="M10 2v4" stroke="#3d9bff" stroke-width="1.500"/><rect x="2" y="14" width="3" height="3" fill="none" stroke="#5a5"/><rect x="15" y="14" width="3" height="3" fill="none" stroke="#e33"/>`,
        anno: `<path d="M10 1c-3 8-5 12-8 18l8-4 8 4C14 13 13 9 10 1z" fill="#1f8cff"/><circle cx="13" cy="6" r="3" fill="none" stroke="#1f8cff" stroke-width="1.400"/>`,
        anno2: `<path d="M10 3c-2 7-4 11-7 16l7-4 7 4c-3-5-5-9-7-16z" fill="#aaa"/><path d="M14 2l-2 5h2l-1 4 4-6h-2l1-3z" fill="#bbb"/>`,
        anno3: `<path d="M10 2c-2 8-4 12-7 17l7-4 7 4c-3-5-5-9-7-17z" fill="#aaa"/>`,
        cog: `<circle cx="10" cy="10" r="6.500" fill="none" stroke="#bbb" stroke-width="3" stroke-dasharray="2.500 2.600"/><circle cx="10" cy="10" r="4" fill="none" stroke="#bbb" stroke-width="2.500"/>`,
        plus: `<path d="M10 2v16M2 10h16" stroke="#ccc" stroke-width="1.800"/>`,
        ruler: `<path d="M6 2h7v17H6z" fill="#aaa"/><path d="M9 5h4M10 8h3M9 11h4M10 14h3" stroke="#555"/>`,
        stcalc: `<path d="M4 3h12v15H4z" fill="none" stroke="#ccc" stroke-width="1.300"/><path d="M7 6h6M7 9h2M11 9h2M7 12h2M11 12h2M7 15h2M11 15h2" stroke="#ccc" stroke-width="1.200"/>`,
        perf: `<circle cx="14" cy="12" r="11" fill="#155a9c" stroke="#1f8cff" stroke-width="1.500"/><path d="M8 16l6-7" stroke="#cde" stroke-width="1.500"/>`,
        binoc: `<path d="M3 4h5v14H2zM12 4h5l1 14h-6z" fill="#cdd3da" stroke="#222"/><path d="M8 7h4v4H8z" fill="#999"/>`,
        user: `<circle cx="10" cy="6" r="4" fill="#dfe3e8" stroke="#333"/><path d="M2 19c0-5 3-7 6-8h4c3 1 6 3 6 8z" fill="#eee" stroke="#333"/>`,
        xa: `<path d="M2 3h6l2 4 2-4h6l-5 7 5 8h-6l-2-4-2 4H2l5-8z" fill="#2d4e9e"/>`,
        a360: `<path d="M10 2L2 17h16z" fill="none" stroke="#2d4e9e" stroke-width="2"/><circle cx="10" cy="3" r="1.500" fill="#dde"/><path d="M6 12h8" stroke="#dde" stroke-width="2"/>`,
        helpc: `<circle cx="10" cy="10" r="8.500" fill="#eef" stroke="#2d4e9e" stroke-width="2"/><text x="10" y="15" text-anchor="middle" font-family="Liberation Sans" font-weight="bold" font-size="14" fill="#1c3f8f">?</text>`
    };
    const svg = (n, s) => `<svg viewBox="0 0 20 20"${s ? ` width="${s}" height="${s}"` : ''} xmlns="http://www.w3.org/2000/svg">${ICONS[n]}</svg>`;
    const ti = n => n === '|' ? '<span class="tsep"></span>' : n === 'v' ? '<span class="caret-d"></span>' : `<span class="ti">${svg(n)}</span>`;
    const combo = (w, inner) => `<div class="cad-combo" style="width:${w}px">${inner}</div>`;
    const grip = '<span class="grip"></span>';
    const abs = (x, w, inner) => `<span class="at" style="left:${x}px;${w ? 'width:' + w + 'px;' : ''}top:1px;display:flex;justify-content:center">${inner}</span>`;

    // quick access
    const qatEl = document.getElementById('qat');
    qatEl.innerHTML = [[63,'new'],[89,'open'],[113,'save'],[138,'saveas'],[161,'plot'],[185,'undo'],[220,'redo']]
        .map(([x, n]) => abs(x - 58, 20, svg(n, 19))).join('')
        + [203, 238].map(x => `<span class="caret-d at" style="left:${x - 51}px;top:10px"></span>`).join('')
        + `<div class="qat-combo"><span class="at" style="left:3px;top:1px">${svg('gear', 18)}</span><span class="at" style="left:21px">복사본 AutoCAD 플래...</span><span class="caret-d at" style="right:3px;top:9px;border-top-color:#eee;border-left-width:4px;border-right-width:4px"></span></div>`
        + `<span class="at" style="left:381px;top:6px;width:8px;border-top:2px solid #ddd"></span><span class="caret-d at" style="left:379px;top:11px;border-top-color:#eee"></span>`;
    document.getElementById('infoCenter').insertAdjacentHTML('beforeend',
        `<span class="caret-d at" style="left:1px;top:7px;border:3px solid transparent;border-left:4px solid #ddd;margin:0 0 0 3px"></span>`
        + [[835,'binoc'],[859,'user'],[979,'xa'],[1003,'a360'],[1049,'helpc']].map(([x, n]) => abs(x - 640, 20, svg(n, 19))).join('')
        + `<span class="at" style="left:243px;top:1px;color:#eee;font-size:13px">로그인</span>`
        + [959, 1018, 1066].map(x => `<span class="caret-d at" style="left:${x - 633}px;top:10px"></span>`).join('')
        + `<span class="at" style="left:402px;top:2px;height:19px;width:1px;background:#777"></span>`);

    // toolbar rows
    document.getElementById('tbRow1').innerHTML =
        `<div class="tb-panel d-flex" style="width:645px">${grip}${['new','open','save','|','plot','prev','publ','d3','|','cut','copy','paste','match','block','|','undo','v','redo','v','|','pan','zrt','zwin','zprev','|','props','dc','tool','sheet','markup','calc','|','help'].map(ti).join('')}</div>`
        + `<div class="tb-panel fill d-flex">${grip}${ti('style')}${combo(120, '<span class="mx-auto pe-2">STANDARD</span>')}<span class="tsep" style="margin:0 2px 0 2px"></span>${ti('dim')}${combo(120, '<span class="mx-auto pe-2">사본 DIMDOT</span>')}<span class="tsep" style="margin:0 2px"></span>${ti('tbl')}${combo(120, '<span class="ps-1">Standard</span>')}<span class="tsep" style="margin:0 2px"></span>${ti('mlead')}${combo(120, '<span class="ps-3">Standard</span>')}</div>`;
    const solid = w => `<span class="lt-line ms-1" style="width:${w}px"></span>`;
    document.getElementById('tbRow2').innerHTML =
        `<div class="tb-panel d-flex" style="width:227px">${grip}${combo(175, '<span class="ps-2">복사본 AutoCAD 플래식1</span>')}${ti('gear')}${ti('wslock')}</div>`
        + `<div class="tb-panel d-flex" style="width:402px">${grip}${ti('layers')}${combo(300, `<span class="d-flex align-items-center ps-1" style="gap:2px">${svg('bulb', 15)}${svg('sun', 15)}${svg('frz', 15)}${svg('lock', 15)}<span class="sw-red ms-1"></span><span class="ms-1">rf-TEXT-10</span></span>`)}${ti('lstack')}${ti('lstack')}${ti('layers')}</div>`
        + `<div class="tb-panel fill d-flex">${grip}${combo(150, '<span class="sw-red ms-1"></span><span class="ms-1">도면층별</span>')}<span class="tsep" style="margin:0 2px;background:#111"></span>${combo(160, `${solid(60)}<span class="ms-1">도면층별</span>`)}<span class="tsep" style="margin:0 2px;background:#111"></span>${combo(125, `${solid(35)}<span class="ms-1">도면층별</span>`)}<span class="tsep" style="margin:0 2px;background:#111"></span>${combo(120, '<span class="ps-2 ms-1">ByColor</span>')}</div>`;

    // left and right vertical bars
    const vbar = list => `<div class="grip-h"></div>` + list.map(n => n === '-' ? `<div style="height:1px;background:#bbb;margin:3px 3px"></div>` : `<div class="vi">${svg(n)}</div>`).join('');
    document.getElementById('leftBar').innerHTML = vbar(['line','xline','pline','polygon','rect','arc','circle','cloud','spline','ellipse','earc','insert','mkblock','point','hatch','grad','region','table','bigA','addsel']);
    document.getElementById('rightBar1').innerHTML = vbar(['erase','copyo','mirror','offset','array','move','rotate','scale','stretch','trim','extend','brkp','brk','join','chamf','fillet','blend','expl']);
    document.getElementById('rightBar2').innerHTML = vbar(['dofront','doback','doabove','dobelow','-','textfront','hatchback']);

    // drawing: helper that collects svg pieces
    const out = [];
    const R = (x, y, w, h, c) => `<rect x="${x}" y="${y}" width="${w}" height="${h}" fill="${c}"/>`;
    const L = (x1, y1, x2, y2, c, sw = 1) => `<path d="M${x1} ${y1}L${x2} ${y2}" stroke="${c}" stroke-width="${sw}" fill="none"/>`;
    const TXT = (x, y, w, c) => L(x, y, x + w, y, c, 5).replace('/>', ' stroke-dasharray="5 1"/>');
    const CY = '#00ffff', MG = '#ff00ff', GR = '#00ff00', YL = '#ffff00', WH = '#fff';

    // one reinforcement table block of the left strip
    function block(labelY, labelW, top, ys, yl, rows) {
        let s = R(68, labelY, labelW, 5, GR);
        const bottom = ys[ys.length - 1];
        s += `<rect x="68.500" y="${top}" width="87" height="${bottom - top}" fill="none" stroke="${CY}"/>`;
        ys.slice(0, -1).forEach(y => { if (y !== top) s += L(68, y, 156, y, CY); });
        yl.forEach(x => s += L(x, top, x, bottom, YL));
        rows.forEach((r, i) => {
            const y0 = (i ? ys[i - 1] : top) + 1, y1 = ys[i];
            const hh = Math.max(y1 - y0 - 1, 2);
            s += R(69, y0, r[0], hh, r[1]);
            r[2].forEach(([cx, w, c]) => s += R(cx - w / 2, y0, w, hh, c));
        });
        return s;
    }
    const two = (w1, w2, c) => [[97.500, w1, c], [135.500, w2, c]];
    const four = (w, c) => [[88.500, w, c], [107, w, c], [126, w, c], [145, w, c]];
    let strip = '';
    strip += `<text x="65" y="143" font-size="10.500" font-weight="bold" fill="${GR}" font-family="Noto Sans CJK KR">해남 현안2지구 C-1블럭</text>`;
    strip += `<text x="73" y="156" font-size="10.500" font-weight="bold" fill="${GR}" font-family="Noto Sans CJK KR">어린이집 및 상시설</text>`;
    strip += L(62, 164.500, 160, 164.500, '#eee', 1.500) + R(64, 167, 11, 4, WH) + R(65, 173, 54, 5, MG);
    strip += TXT(64, 184, 81, MG) + R(64, 187, 81, 5, MG);
    [[197, 72, 42], [220, 72, 42]].forEach(([y, a, b]) => strip += TXT(64, y + 1, a, MG) + R(64, y + 3, b, 5, MG));
    [[210, 53, 50], [236, 53, 50]].forEach(([y, a, b]) => strip += TXT(64, y + 1, a, MG) + R(64, y + 3, b, 5, MG));
    strip += R(64, 246, 42, 5, MG) + R(64, 252, 48, 5, MG);
    strip += block(265, 31, 271.500, [281, 288, 295, 301, 308, 314.500], [79.500, 117.500], [
        [8, MG, two(19, 19, MG)], [9, GR, two(6, 7, CY)], [9, GR, two(14, 15, CY)], [9, GR, two(14, 15, CY)], [10, GR, two(14, 17, MG)], [11, GR, two(16, 19, MG)]]);
    strip += block(315, 27, 321.500, [331, 338, 345, 351, 358, 364, 371], [79.500, 117.500], [
        [8, MG, two(19, 19, MG)], [9, GR, two(6, 7, CY)], [9, GR, two(14, 15, CY)], [9, GR, two(14, 15, CY)], [10, GR, two(14, 17, MG)], [11, GR, two(16, 19, MG)], [11, GR, two(18, 19, MG)]]);
    strip += block(373, 27, 379.500, [386, 392, 399, 405, 412, 419, 425, 432], [79.500, 117.500], [
        [8, MG, two(16, 16, MG)], [8, MG, four(8, MG)], [9, GR, four(6, CY)], [9, GR, four(6, CY)], [9, GR, four(6, CY)], [10, GR, four(6, MG)], [11, GR, four(8, MG)], [11, GR, four(9, MG)]]);
    strip += L(98.500, 386, 98.500, 432, CY) + L(136.500, 386, 136.500, 432, CY);
    strip += block(434, 23, 440.500, [447, 453, 460, 467, 473, 480, 486, 493], [79.500, 117.500], [
        [8, MG, two(16, 16, MG)], [8, MG, four(8, MG)], [9, GR, four(6, CY)], [9, GR, four(6, CY)], [9, GR, four(6, CY)], [10, GR, four(6, MG)], [11, GR, four(8, MG)], [11, GR, four(9, MG)]]);
    strip += L(98.500, 447, 98.500, 493, CY) + L(136.500, 447, 136.500, 493, CY);
    const c5 = (w1, w2, c) => [[102.500, w1, c], [137.500, w2, c]];
    strip += block(498, 27, 504.500, [510, 516, 522, 528, 534, 540, 546], [86.500, 120.500], [
        [12, GR, c5(8, 8, GR)], [14, GR, c5(7, 7, CY)], [14, GR, c5(7, 7, CY)], [14, GR, c5(7, 7, CY)], [17, GR, c5(7, 9, MG)], [17, GR, c5(9, 9, MG)], [17, GR, c5(9, 9, MG)]]);
    strip += R(135, 549, 20, 4, GR);
    strip += block(549, 47, 554.500, [562, 570, 576, 581, 586, 591, 596, 600], [], [
        [9, GR, [[107, 24, GR], [146, 6, GR]]], [8, GR, [[107, 23, GR], [146, 21, GR]]], [8, GR, [[106, 7, GR], [145, 7, GR]]], [8, GR, [[106, 7, GR], [145, 7, GR]]], [8, GR, [[106, 7, GR], [145, 7, GR]]], [8, GR, [[106, 7, GR], [145, 7, GR]]], [8, GR, [[106, 7, GR], [145, 7, GR]]], [8, GR, [[106, 7, GR], [145, 7, GR]]]]);
    strip += L(78.500, 554, 78.500, 600, CY) + L(135.500, 554, 135.500, 600, CY);
    // last block: schedule with white cells
    strip += R(68, 602, 46, 4, GR);
    strip += `<rect x="68.500" y="608.500" width="87" height="40" fill="none" stroke="${CY}"/>` + L(84.500, 608, 84.500, 649, CY) + L(68, 628.500, 156, 628.500, CY);
    [95.500, 110.500, 125.500, 140.500].forEach(x => strip += L(x, 608, x, 649, CY));
    [618.500, 638.500].forEach(y => strip += L(84, y, 156, y, CY));
    strip += R(75, 616, 5, 4, WH) + R(74, 636, 7, 4, WH);
    [[90, 7, 11], [102, 10, 10], [117, 10, 10], [132, 10, 10], [147, 10, 10]].forEach(([cx, w]) => {
        strip += R(cx - w / 2, 611, w, 4, WH) + R(cx - w / 2 + 1, 622, w - 3, 4, WH) + R(cx - w / 2, 630, w, 5, WH) + R(cx - w / 2 + 1, 641, w - 3, 4, WH);
    });
    // vertical frame lines and title rows
    strip += L(61.500, 136, 61.500, 782, '#ddd', 1.500) + L(160.500, 136, 160.500, 782, '#eee', 2);
    [[658, '#ddd'], [696, '#ddd'], [724, '#ddd'], [749, '#ddd'], [776, '#ddd']].forEach(([y, c]) => strip += L(62, y + .5, 160, y + .5, c, 1.500));
    [670, 683, 737].forEach(y => strip += L(62, y + .5, 160, y + .5, '#e010d8'));
    strip += R(65, 661, 13, 4, WH) + R(65, 674, 10, 4, WH) + R(65, 687, 10, 4, WH) + R(64, 727, 8, 5, WH) + R(65, 740, 10, 4, WH) + R(65, 753, 25, 4, WH) + R(65, 780, 24, 2, WH);

    out.push(`<defs><g id="strip">${strip}</g></defs><use href="#strip"/><use href="#strip" x="1056"/>`);
    // frame lines across the sheet
    out.push(L(192.500, 136, 192.500, 782, '#ddd', 1.500), L(222.500, 136, 222.500, 782, '#ddd', 1.500), L(223, 143.500, 1118, 143.500, '#ddd', 1.500));
    // red sheet title, only its lower edge shows under the toolbar
    [[75,85],[110,125],[150,165],[195,235],[283,310],[320,335],[390,400],[432,440],[462,468],[555,562],[578,585],[605,635],[678,695],[705,725],[750,795],[810,870],[975,1025],[1050,1085],[1115,1158],[1212,1235],[1245,1305]]
        .forEach(([a, b]) => out.push(R(225 + a / 3, 136, (b - a) / 3, 2, '#f00')));
    // small sheet fragment left of strip
    out.push(`<rect x="30" y="154.500" width="20.500" height="60.500" fill="none" stroke="#eee"/>`, L(30, 207, 50, 207, '#eee'), R(36, 157, 7, 6, MG), R(36, 209, 11, 4, MG));
    out.push(`<path d="M36 157.500h9v33h-9" fill="none" stroke="${YL}"/><path d="M37 176h9v12H36" fill="none" stroke="#eee"/>`, L(36, 164, 43, 177, '#eee'), L(43, 164, 36, 177, '#eee'));
    // UCS icon
    out.push(`<g stroke="#dcdcdc" fill="none"><path d="M52.500 714v45M58 764.500h45"/><rect x="48.500" y="759.500" width="9.500" height="9.500"/></g>`);
    out.push(`<text x="60" y="709" font-size="17" text-anchor="middle" fill="#dcdcdc" font-family="Liberation Sans">Y</text><text x="113.500" y="763" font-size="18" text-anchor="middle" fill="#dcdcdc" font-family="Liberation Sans">X</text>`);
    // title and crosshair
    out.push(`<text x="458" y="199" font-size="9" font-weight="bold" fill="#fff" letter-spacing="4.500" font-family="Noto Sans CJK KR">철근재료표</text>`);
    document.getElementById('cadSvg').innerHTML = out.join('');

    // rebar schedule
    const H = '수평근', V = '수직근';
    const rows = [
        [1, '', 'HD10', 1700, 4, '6.80', '0.004', 1], [2, H, 'HD10', 1960, 3, '5.88', '0.003', 'b800'], [3, V, 'HD10', 2400, 54, '129.60', '0.078', 2],
        [4, H, 'HD13', 860, 14, '12.04', '0.012', 'b560'], [5, H, 'HD13', 1200, 58, '69.60', '0.069', 2], [6, H, 'HD13', 1400, 8, '11.20', '0.011', 't1400'],
        [7, V, 'HD13', 1410, 76, '107.16', '0.107', 'k'], [8, V, 'HD13', 1700, 10, '17.00', '0.017', 't1700'], [9, H, 'HD16', 2120, 14, '29.68', '0.050', 2],
        [10, H, 'HD13', 2140, 14, '29.96', '0.030', 't2140'], [11, V, 'HD16', 2400, 336, '806.40', '0.802', 1], [12, H, 'HD13', 2930, 14, '41.02', '0.041', 1],
        [13, H, 'HD16', 3220, 22, '70.84', '0.070', 2], [14, H, 'HD13', 3560, 14, '49.84', '0.050', 1], [15, H, 'HD16', 4040, 14, '56.56', '0.056', 2],
        [16, H, 'HD13', 3530, 29, '101.84', '0.101', 1], [17, H, 'HD16', 4320, 14, '60.48', '0.060', 2], [18, H, 'HD13', 5210, 9, '46.89', '0.046', 1],
        [19, H, 'HD16', 8000, 14, '112.00', '0.111', 2], [20, V, 'HD16', 2000, 10, '20.00', '0.031', 1], [21, V, 'HD16', 2600, 24, '62.40', '0.097', 2],
        [22, V, 'SHD19', 2400, 12, '28.80', '0.065', 1]
    ];
    const T = (x, y, t, a = 'middle') => `<text x="${x}" y="${y}" text-anchor="${a}" font-size="8" font-weight="bold" fill="#fff" stroke="none" font-family="Liberation Sans">${t}</text>`;
    function shape(k) {
        let s = '';
        if (typeof k === 'number') s = R(14, 5, 12, 5, WH) + L(0, 12.500, 41, 12.500, '#eee', k === 2 ? 2 : 1);
        else if (k[0] === 't') s = T(20, 11, k.slice(1)) + L(0, 12.500, 41, 12.500, '#eee');
        else if (k[0] === 'b') s = T(27, 6, k.slice(1)) + T(0, 16, '150', 'start') + `<path d="M41 7.500H16V17h25" fill="none" stroke="#eee" stroke-width="1.400"/>`;
        else s = T(30, 6, '1500') + T(0, 16, 'ano', 'start') + `<path d="M41 7.500H16l-3 3v6" fill="none" stroke="#eee"/>`;
        return `<svg width="41" height="18" viewBox="0 0 41 18">${s}</svg>`;
    }
    const head = ['번호', '부재명', '규격', '형상', '길이(mm)', '수량', '총길이(m)', '중량(Ton)'];
    const sums = [['재료=SD40', 'HD10 합계', '142.280', '0.080'], ['재료=SD40', 'HD13 합계', '1616.800', '1.610'], ['재료=SD40', 'HD16 합계', '82.400', '0.126'], ['재료=SD50', 'SHD19 합계', '28.800', '0.065'], ['', '총중량', '', '1.886']];
    document.getElementById('rebarTable').innerHTML =
        `<colgroup>${[23, 34, 27, 42, 44, 35, 53, 47].map(w => `<col style="width:${w}px">`).join('')}</colgroup>`
        + `<thead><tr>${head.map(t => `<th class="c">${t}</th>`).join('')}</tr></thead>`
        + `<tbody>${rows.map(r => `<tr><td class="c">${r[0]}</td><td class="c">${r[1]}</td><td class="c">${r[2]}</td><td class="s">${shape(r[7])}</td><td>${r[3]}</td><td>${r[4]}</td><td>${r[5]}</td><td>${r[6]}</td></tr>`).join('')}`
        + sums.map(r => `<tr><td></td><td></td><td></td><td></td><td class="c sum-cell">${r[0]}</td><td class="c sum-cell">${r[1]}</td><td>${r[2]}</td><td>${r[3]}</td></tr>`).join('')
        + `</tbody>`;
    // snap marker and crosshair on top of the table
    document.querySelector('.rebar-wrap').insertAdjacentHTML('afterend',
        `<svg class="at" style="left:0;top:0" width="1111" height="646" viewBox="36 136 1111 646">`
        + L(457.500, 155, 457.500, 225, '#fff') + L(409, 204.500, 505, 204.500, '#fff')
        + `<rect x="451.500" y="198.500" width="11" height="11" fill="none" stroke="#0a0" stroke-width="2"/>`
        + L(480, 216.500, 492, 216.500, GR) + L(485.500, 212, 485.500, 222, GR) + `</svg>`);

    // status bar
    const si = (n, w) => `<span class="st-i" style="width:${w}px">${svg(n)}</span>`;
    const sc = '<span class="caret-d"></span>', ss = '<span class="st-sep"></span>';
    document.getElementById('statusRow').insertAdjacentHTML('beforeend',
        `<div class="st-panel d-flex justify-content-end pe-1 coord-text" style="width:152px">4625522, -3250913, 0</div>`
        + `<div class="st-panel d-flex justify-content-center" style="width:33px;margin-left:1px">모형</div>`
        + `<div class="st-panel d-flex" style="width:65px;margin-left:1px">${si('grid', 24)}${si('snap', 26)}${sc}</div>`
        + `<div class="st-panel d-flex" style="width:346px;margin-left:1px">${si('infer', 24)}${ss}${si('dyn', 24)}${ss}${si('ortho', 24)}${si('polar', 24)}${sc}${si('iso', 24)}${sc}${ss}${si('osnap', 22)}${si('snap3', 24)}${sc}${ss}${si('lw', 24)}${sc}${ss}${si('transp', 24)}${ss}${si('selcyc', 24)}${ss}${si('gizmo', 24)}${sc}</div>`
        + `<div class="st-panel d-flex" style="width:103px;margin-left:3px">${si('ducs', 24)}${si('dyncube', 24)}${sc}${si('gizmo2', 22)}${sc}</div>`
        + `<div class="st-panel d-flex" style="width:146px;margin-left:2px">${si('anno', 24)}${si('anno2', 24)}${si('anno3', 24)}<span class="scale-text">1:1 / 100%</span>${sc}</div>`
        + `<div class="st-panel d-flex" style="width:65px;margin-left:2px">${si('cog', 24)}${sc}${ss}${si('plus', 25)}</div>`
        + `<div class="st-panel d-flex" style="width:124px;margin-left:1px">${si('ruler', 24)}<span class="ms-2" style="width:62px;font-size:13.500px">십진</span>${sc}${ss}${si('stcalc', 24)}</div>`
        + `<div class="st-panel d-flex" style="width:18px;margin-left:1px;position:relative;overflow:hidden"><span class="st-i" style="width:24px">${svg('perf')}</span></div>`);
</script>
</body>
</html>
